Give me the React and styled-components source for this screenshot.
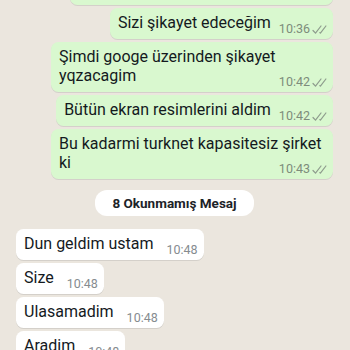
import React from "react";
import styled, { createGlobalStyle } from "styled-components";

const GlobalStyle = createGlobalStyle`
  html, body { margin: 0; padding: 0; }
  body {
    background: #ebe6de;
    font-family: Roboto, "Noto Sans", "Liberation Sans", sans-serif;
    -webkit-font-smoothing: antialiased;
  }
`;

const Screen = styled.div`
  width: 350px;
  height: 350px;
  overflow: hidden;
  background: #ebe6de;
`;

const Thread = styled.div`
  display: flex;
  flex-direction: column;
  gap: 3px;
  padding: 0 17px 0 16px;
  margin-top: -25px;
`;

const Row = styled.div`
  display: flex;
  justify-content: ${(p) => (p.$out ? "flex-end" : "flex-start")};
`;

const Bubble = styled.div`
  max-width: 282px;
  box-sizing: border-box;
  padding: 5px 6px 7px 8px;
  border-radius: 7.5px;
  background: ${(p) => (p.$out ? "#d9f8cf" : "#ffffff")};
  box-shadow: 0 1px 0.5px rgba(11, 20, 26, 0.1);
  color: #141a1e;
  font-size: 16px;
  line-height: 19px;
`;

const ClippedBubble = styled(Bubble)`
  width: 263px;
  height: 30px;
`;

const Text = styled.span`
  white-space: pre-wrap;
`;

const Meta = styled.span`
  float: right;
  display: inline-flex;
  align-items: center;
  gap: 2px;
  margin: 8px 0 -4px ${(p) => (p.$out ? "8px" : "13px")};
  height: 15px;
  font-size: 12.5px;
  line-height: 15px;
  color: ${(p) => (p.$out ? "#7d8c7b" : "#868c90")};
`;

const Ticks = styled.svg`
  width: 15px;
  height: 11px;
  margin-top: 1px;
  color: #8e9c8d;
`;

const BannerRow = styled.div`
  display: flex;
  justify-content: center;
  margin: 8px 0 10px;
`;

const Pill = styled.div`
  height: 26px;
  padding: 0 17px;
  border-radius: 12px;
  background: #ffffff;
  color: #1c2328;
  font-size: 13.5px;
  font-weight: 700;
  line-height: 26px;
`;

const DoubleCheck = () => (
  <Ticks viewBox="0 0 15 11" fill="none" stroke="currentColor" strokeWidth="1.2" strokeLinecap="round" strokeLinejoin="round">
    <path d="M1 6.5 L3.5 9.2 L9 2" />
    <path d="M7.8 8.6 L8.4 9.2 L13.9 2" />
  </Ticks>
);

const Message = ({ out, text, time }) => (
  <Row $out={out}>
    <Bubble $out={out}>
      <Text>{text}</Text>
      <Meta $out={out}>
        {time}
        {out && <DoubleCheck />}
      </Meta>
    </Bubble>
  </Row>
);

const outgoing = [
  { text: "Sizi şikayet edeceğim", time: "10:36" },
  { text: "Şimdi googe üzerinden şikayet yqzacagim", time: "10:42" },
  { text: "Bütün ekran resimlerini aldim", time: "10:42" },
  { text: "Bu kadarmi turknet kapasitesiz şirket ki", time: "10:43" },
];

const incoming = [
  { text: "Dun geldim ustam", time: "10:48" },
  { text: "Size", time: "10:48" },
  { text: "Ulasamadim", time: "10:48" },
  { text: "Aradim", time: "10:48" },
];

export default function App() {
  return (
    <>
      <GlobalStyle />
      <Screen>
        <Thread>
          <Row $out>
            <ClippedBubble $out />
          </Row>
          {outgoing.map((m, i) => (
            <Message key={"o" + i} out text={m.text} time={m.time} />
          ))}
          <BannerRow>
            <Pill>8 Okunmamış Mesaj</Pill>
          </BannerRow>
          {incoming.map((m, i) => (
            <Message key={"i" + i} text={m.text} time={m.time} />
          ))}
        </Thread>
      </Screen>
    </>
  );
}
